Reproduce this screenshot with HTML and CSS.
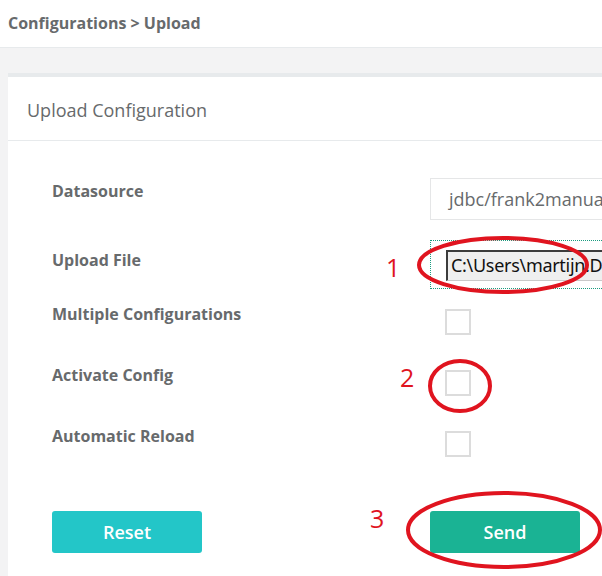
FILE: index.html
```html
<!DOCTYPE html>
<html>
<head>
<meta charset="utf-8">
<link rel="stylesheet" href="styles.css">
</head>
<body>
<div class="topbar"><span class="crumb">Configurations &gt; Upload</span></div>
<div class="wrapper">
  <div class="card">
    <div class="card-title">Upload Configuration</div>
    <div class="card-body">
      <div class="form-row row-ds">
        <div class="label">Datasource</div>
        <div class="control"><div class="select">jdbc/frank2manual</div></div>
      </div>
      <div class="form-row row-file">
        <div class="label">Upload File</div>
        <div class="control">
          <div class="file-zone"><div class="file-field">C:\Users\martijn.Documents\config.zip</div></div>
        </div>
      </div>
      <div class="form-row row-check">
        <div class="label">Multiple Configurations</div>
        <div class="control"><div class="checkbox"></div></div>
      </div>
      <div class="form-row row-check">
        <div class="label">Activate Config</div>
        <div class="control"><div class="checkbox"></div></div>
      </div>
      <div class="form-row row-check">
        <div class="label">Automatic Reload</div>
        <div class="control"><div class="checkbox"></div></div>
      </div>
      <div class="form-row row-buttons">
        <div class="label"><button class="btn btn-reset">Reset</button></div>
        <div class="control"><button class="btn btn-send">Send</button></div>
      </div>
    </div>
  </div>
</div>
<svg class="annotations" width="602" height="576" viewBox="0 0 602 576">
  <g fill="none" stroke="#e0141f" stroke-width="4">
    <ellipse cx="503" cy="265" rx="84" ry="27"/>
    <ellipse cx="460" cy="386" rx="30" ry="25"/>
    <ellipse cx="504" cy="530" rx="96" ry="37"/>
  </g>
  <g class="num" fill="#e0141f">
    <text x="386" y="277">1</text>
    <text x="400" y="387">2</text>
    <text x="370" y="528">3</text>
  </g>
</svg>
</body>
</html>
```
FILE: styles.css
```css
html, body {
  margin: 0;
  padding: 0;
}
body {
  background: #f3f3f4;
  font-family: "Open Sans", "Noto Sans", sans-serif;
  color: #676a6c;
  width: 602px;
  height: 576px;
  overflow: hidden;
  position: relative;
}
.topbar {
  height: 47px;
  background: #fff;
  border-bottom: 1px solid #e7eaec;
  display: flex;
  align-items: center;
  padding-left: 8px;
}
.crumb {
  font-weight: 700;
  font-size: 16px;
  color: #676a6c;
  margin-top: -2px;
}
.wrapper {
  padding: 25px 0 0 8px;
}
.card {
  width: 760px;
  background: #fff;
  border-top: 4px solid #e7eaec;
  height: 520px;
}
.card-title {
  height: 64px;
  box-sizing: border-box;
  border-bottom: 1px solid #e7eaec;
  padding: 2px 0 0 19px;
  display: flex;
  align-items: center;
  font-size: 18px;
  color: #676a6c;
}
.card-body {
  padding: 37px 0 0 44px;
}
.form-row {
  display: flex;
}
.label {
  width: 378px;
  flex: none;
  font-weight: 700;
  font-size: 16px;
  line-height: 20px;
  padding-top: 3px;
  box-sizing: border-box;
}
.control {
  flex: 1;
  min-width: 0;
}
.row-ds {
  height: 42px;
}
.select {
  height: 42px;
  box-sizing: border-box;
  border: 1px solid #e5e6e7;
  padding-left: 18px;
  display: flex;
  align-items: center;
  font-size: 18px;
  color: #676a6c;
  white-space: nowrap;
}
.row-file {
  margin-top: 20px;
  height: 49px;
}
.row-file .label {
  padding-top: 10px;
}
.file-zone {
  height: 49px;
  box-sizing: border-box;
  border: 1px dotted #1a9c80;
  padding: 9px 0 0 15px;
  white-space: nowrap;
  overflow: hidden;
}
.file-field {
  height: 31px;
  box-sizing: border-box;
  background: #efefef;
  border-top: 2px solid #3c3c3c;
  border-left: 2px solid #3c3c3c;
  border-bottom: 1px solid #c9c9c9;
  font-family: "Noto Sans", "Open Sans", sans-serif;
  font-size: 18px;
  line-height: 27px;
  color: #111;
  padding-left: 3px;
  letter-spacing: -0.3px;
}
.row-check {
  height: 61px;
}
.row-file + .row-check {
  margin-top: 12px;
}
.checkbox {
  margin: 8px 0 0 15px;
  width: 26px;
  height: 26px;
  box-sizing: border-box;
  border: 2px solid #dcdcdc;
  background: #fff;
}
.row-buttons {
  margin-top: 27px;
}
.row-buttons .label {
  padding-top: 0;
}
.btn {
  width: 150px;
  height: 42px;
  border: none;
  border-radius: 3px;
  color: #fff;
  font-family: "Open Sans", sans-serif;
  font-weight: 600;
  font-size: 18px;
  padding: 0;
}
.btn-reset {
  background: #23c6c8;
}
.btn-send {
  background: #1ab394;
}
.annotations {
  position: absolute;
  left: 0;
  top: 0;
  pointer-events: none;
}
.num text {
  font-family: "Open Sans", sans-serif;
  font-size: 25px;
}
```
